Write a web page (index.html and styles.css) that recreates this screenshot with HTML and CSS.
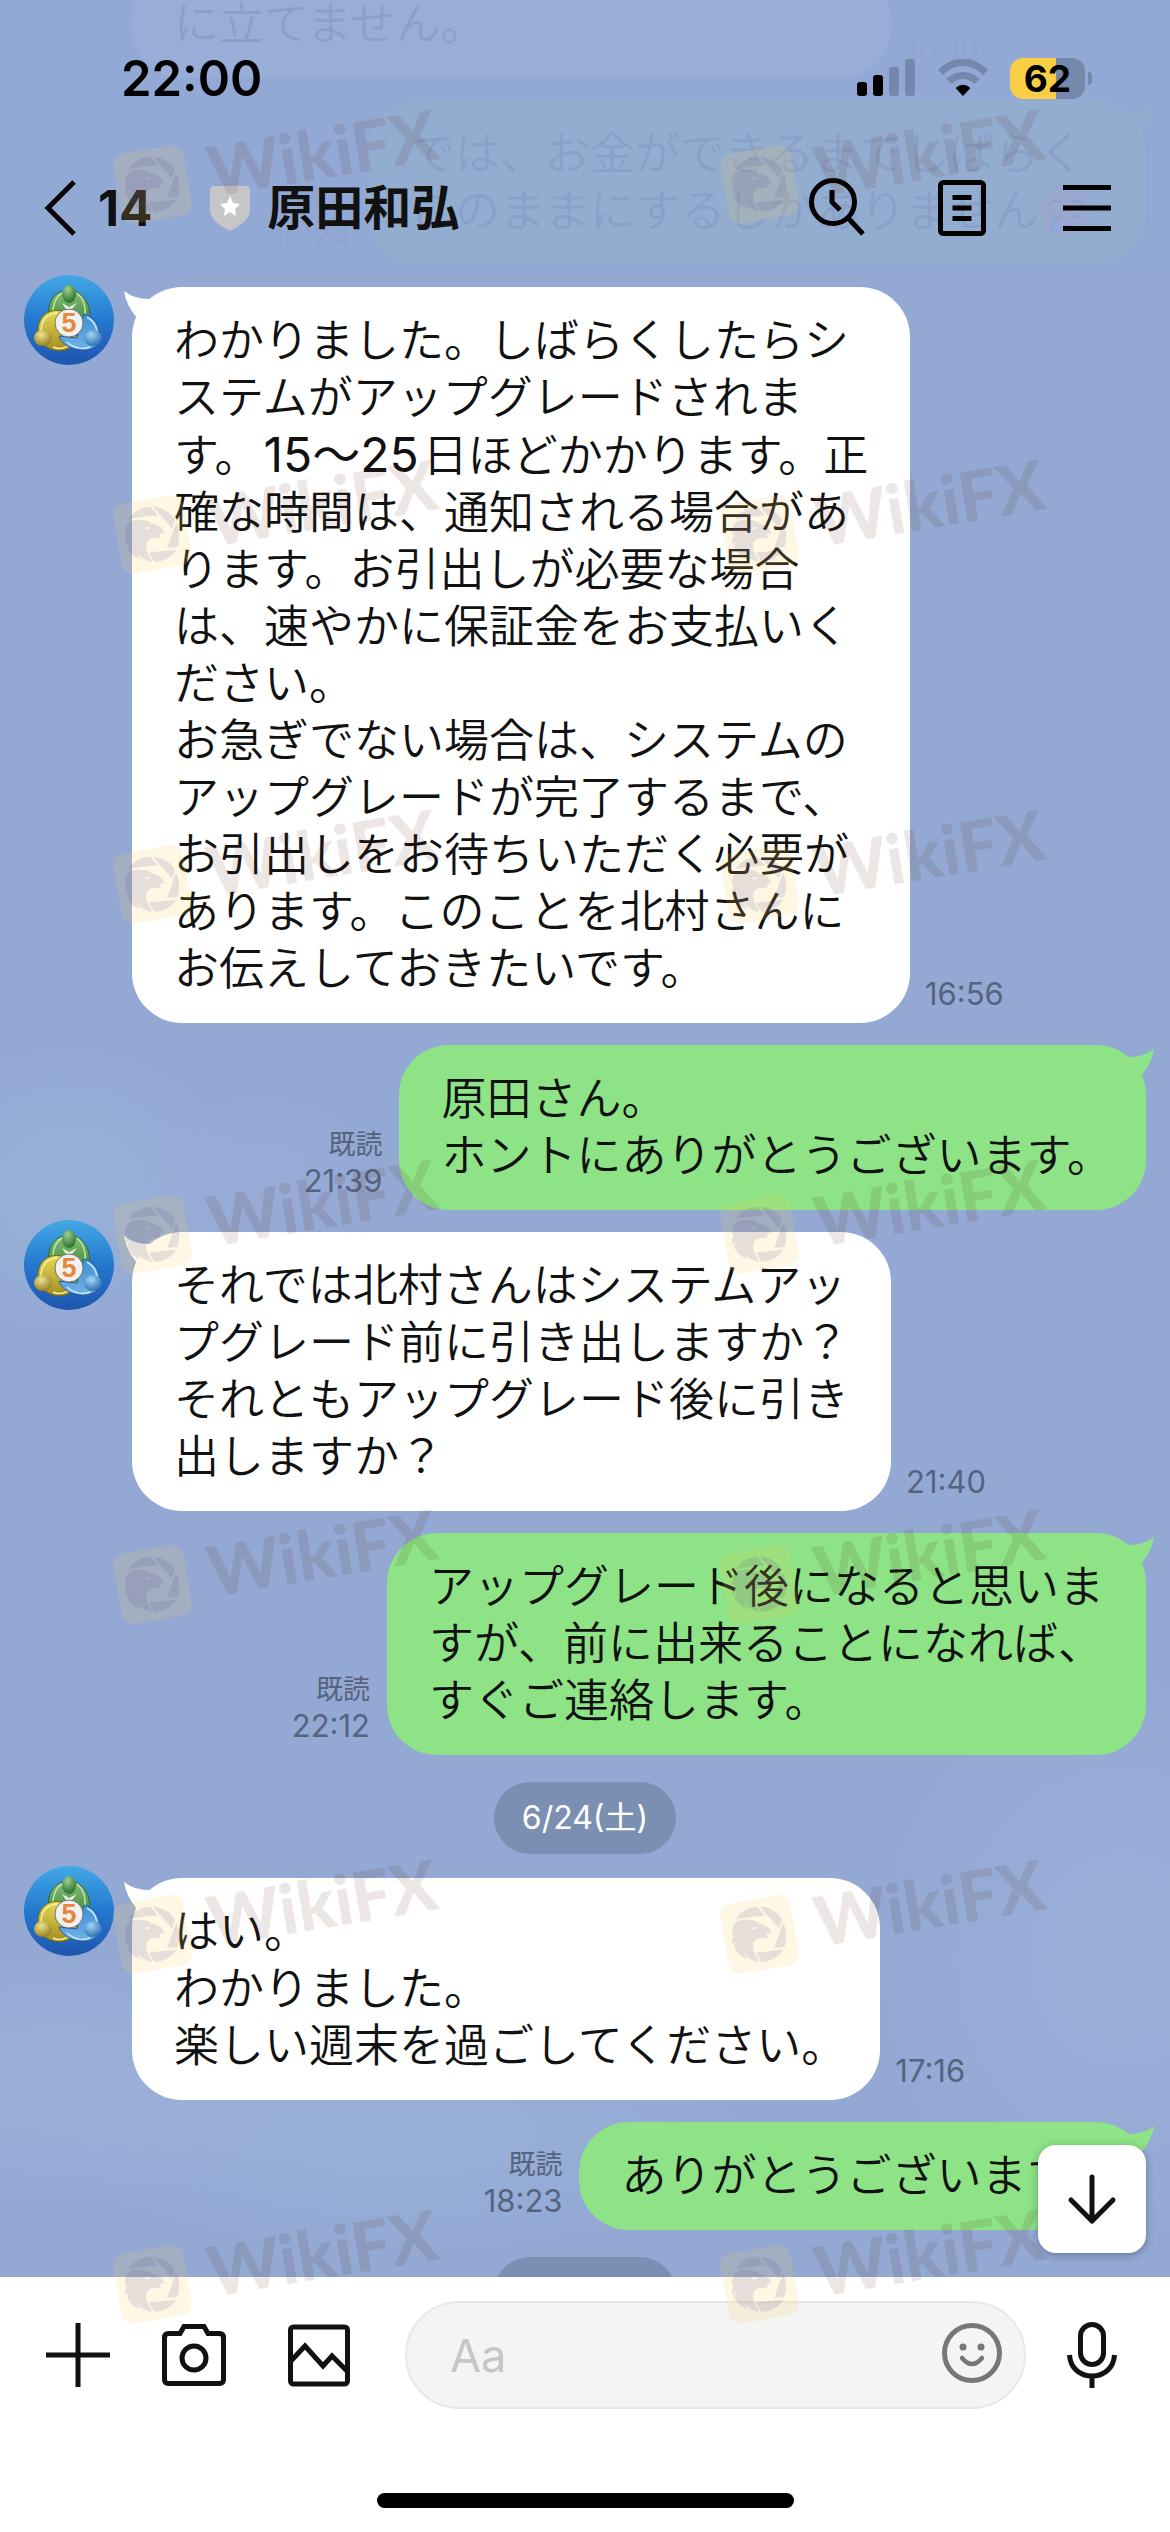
FILE: index.html
```html
<!DOCTYPE html>
<html lang="ja">
<head>
<meta charset="UTF-8">
<meta name="viewport" content="width=device-width, initial-scale=1.0">
<title>原田和弘</title>
<link rel="stylesheet" href="styles.css">
</head>
<body>
  <!-- shared drawings -->
  <svg class="defs" aria-hidden="true">
    <defs>
      <linearGradient id="av-bg" x1="0" y1="0" x2="0" y2="1">
        <stop offset="0" stop-color="#43a9e6"/>
        <stop offset="0.5" stop-color="#2478cf"/>
        <stop offset="1" stop-color="#1f55ae"/>
      </linearGradient>
      <linearGradient id="av-green" x1="0" y1="0" x2="0" y2="1">
        <stop offset="0" stop-color="#8cc078"/>
        <stop offset="1" stop-color="#2a7f31"/>
      </linearGradient>
      <linearGradient id="av-yellow" x1="0" y1="0" x2="0" y2="1">
        <stop offset="0" stop-color="#e6d955"/>
        <stop offset="1" stop-color="#a48c22"/>
      </linearGradient>
      <linearGradient id="av-blue" x1="0" y1="0" x2="0" y2="1">
        <stop offset="0" stop-color="#3f8fd6"/>
        <stop offset="1" stop-color="#6fb2e6"/>
      </linearGradient>
      <radialGradient id="head-green" cx="0.4" cy="0.25" r="0.8">
        <stop offset="0" stop-color="#9fce8c"/>
        <stop offset="1" stop-color="#1f6a28"/>
      </radialGradient>
      <radialGradient id="head-yellow" cx="0.4" cy="0.3" r="0.8">
        <stop offset="0" stop-color="#eee38a"/>
        <stop offset="1" stop-color="#8a7415"/>
      </radialGradient>
      <radialGradient id="head-blue" cx="0.4" cy="0.3" r="0.8">
        <stop offset="0" stop-color="#a5d5f5"/>
        <stop offset="1" stop-color="#1b62ae"/>
      </radialGradient>
    </defs>
    <symbol id="avatar" viewBox="0 0 90 90">
      <circle cx="45" cy="45" r="45" fill="url(#av-bg)"/>
      <path d="M25 43C22 25 33 15 45 15s23 13 20 29c-1 6-4 10-8 11l-3-16H34l-5 5z" fill="url(#av-green)" stroke="#2a6b30" stroke-width="1"/>
      <path d="M29 41c-1-13 5-22 10-23M61 41c1-12-3-19-8-23" fill="none" stroke="#c5e3b6" stroke-width="1.500"/>
      <path d="M38 36C23 33 13 43 14 58c1 13 15 20 27 17 8-2 12-8 13-14l-17-3z" fill="url(#av-yellow)" stroke="#75651a" stroke-width="1"/>
      <path d="M34 38c-11 0-17 8-17 18M29 72c6 3 14 1 19-4" fill="none" stroke="#f8f2a0" stroke-width="1.500"/>
      <path d="M60 39c10 2 17 12 16 25-2 10-14 13-25 10-8-2-14-7-16-13l18 2z" fill="url(#av-blue)" stroke="#215f9f" stroke-width="1"/>
      <path d="M63 42c7 4 10 10 10 17M43 67c6 6 16 8 23 5" fill="none" stroke="#cbe8fb" stroke-width="1.500"/>
      <path d="M38 28l7 4 8-4-5 6h-6z" fill="#e7f2df"/>
      <ellipse cx="45" cy="19" rx="7" ry="9" fill="url(#head-green)"/>
      <ellipse cx="19" cy="63" rx="9" ry="8" fill="url(#head-yellow)"/>
      <ellipse cx="69" cy="63" rx="9" ry="8" fill="url(#head-blue)"/>
      <circle cx="45" cy="48" r="14" fill="#f1f1f3" stroke="#55604a" stroke-width="0.800"/>
      <text x="45" y="57" text-anchor="middle" class="avatar-digit">5</text>
    </symbol>
    <symbol id="mark" viewBox="0 0 350 140">
      <g transform="translate(0 30) scale(0.3333)">
        <rect x="36" y="48" width="213" height="213" rx="34" transform="rotate(-10 142 154)" fill="#fad05a" fill-opacity="0.16"/>
        <g fill="#50469e" fill-opacity="0.14">
          <path d="M72 108C84 86 108 72 136 71L158 97C128 100 100 103 72 108Z"/>
          <path d="M144 71C174 73 196 88 210 110L201 136Z"/>
          <path d="M213 119C225 140 225 168 217 192L187 194Z"/>
          <path d="M137 208L214 200C200 222 176 236 148 236L133 212Z"/>
          <path d="M60 152C61 132 66 120 78 114C100 108 120 110 140 119L138 122C158 123 174 134 178 152C172 148 166 150 162 156C168 159 170 161 164 164C152 165 138 163 130 172C118 186 122 204 138 228L141 236C124 234 104 224 98 210C98 218 102 226 108 230C84 220 70 204 66 190L76 172C70 178 66 182 62 186C59 176 60 168 66 158Z M118 134C122 142 132 141 136 132Z" fill-rule="evenodd"/>
        </g>
      </g>
      <text x="107" y="94" transform="rotate(-9.5 107 94)" class="mark-text">WikiFX</text>
    </symbol>
  </svg>

  <div class="phone">
    <header class="header">
      <div class="status-bar">
        <time class="clock">22:00</time>
        <div class="status-icons">
          <svg width="59" height="38" viewBox="0 0 59 38" aria-hidden="true">
            <rect x="0" y="23" width="10" height="14" rx="3"/>
            <rect x="16" y="16" width="10" height="21" rx="3"/>
            <g fill="#7587ab">
              <rect x="32" y="8" width="10" height="29" rx="3"/>
              <rect x="48" y="0" width="10" height="37" rx="3"/>
            </g>
          </svg>
          <svg width="50" height="38" viewBox="0 0 50 38" aria-hidden="true">
            <path d="M2.500 13.500C15 0 35 0 47.500 13.500" fill="none" stroke="#7587ab" stroke-width="7"/>
            <path d="M11 22.500C19 14.500 31 14.500 39 22.500" fill="none" stroke="#7587ab" stroke-width="7"/>
            <path d="M25 37L17.500 29Q25 22.500 32.500 29Z"/>
          </svg>
          <div class="battery"><span class="battery-level">62</span></div>
        </div>
      </div>
      <nav class="nav">
        <a class="back" href="#">
          <svg width="34" height="56" viewBox="0 0 34 56" aria-hidden="true"><path d="M30 2L4 28L30 54" fill="none" stroke="#000" stroke-width="5"/></svg>
          <span>14</span>
        </a>
        <h1 class="title">
          <svg width="42" height="48" viewBox="0 0 42 48" aria-hidden="true">
            <path d="M5 2H37Q41 2 41 6V26Q41 37 21 47Q1 37 1 26V6Q1 2 5 2Z" fill="#c6c6c8"/>
            <path d="M21 12l3 7 7 1-5 5 1 7-6-4-6 4 1-7-5-5 7-1z" fill="#fff"/>
          </svg>
          原田和弘
        </h1>
        <div class="nav-actions">
          <button type="button" aria-label="検索">
            <svg width="64" height="64" viewBox="0 0 64 64"><g fill="none" stroke="#000" stroke-width="5"><circle cx="28" cy="26" r="21.500"/><path d="M43 42L58 58M27 14V26L35 34"/></g></svg>
          </button>
          <button type="button" aria-label="ノート">
            <svg width="64" height="64" viewBox="0 0 64 64"><g fill="none" stroke="#000" stroke-width="5"><rect x="10.500" y="6.500" width="43" height="51" rx="3"/><path d="M22.500 21.500H41.500M22.500 32H41.500M22.500 42.500H41.500"/></g></svg>
          </button>
          <button type="button" aria-label="メニュー">
            <svg width="64" height="64" viewBox="0 0 64 64"><path d="M8 11.500H56M8 32H56M8 52.500H56" fill="none" stroke="#000" stroke-width="5"/></svg>
          </button>
        </div>
      </nav>
    </header>

    <main class="chat">
      <div class="messages">
        <div class="row">
          <span class="avatar"></span>
          <p class="bubble bubble-wide">に立てません。</p>
          <div class="meta"><time>16:10</time></div>
        </div>

        <div class="row mine">
          <div class="meta">既読<time>16:24</time></div>
          <p class="bubble bubble-widest">では、お金ができるまでしばらく<br>このままにするしかありません<svg class="emoji" viewBox="0 0 54 54" role="img" aria-label="泣き顔"><circle cx="27" cy="27" r="26" fill="#ff9a6a"/><path d="M8 22q6-9 14-4M32 18q8-5 14 4M14 30q5 4 9 0M31 30q5 4 9 0M20 44q7-5 14 0" fill="none" stroke="#5b3418" stroke-width="3"/><path d="M16 32q9 14 0 20-9-6 0-20z" fill="#4fa3f7"/></svg></p>
        </div>

        <div class="row">
          <svg class="avatar" role="img" aria-label="原田和弘"><use href="#avatar"/></svg>
          <p class="bubble bubble-widest">わかりました。しばらくしたらシ<br>ステムがアップグレードされま<br>す。<span class="days">15〜25</span>日ほどかかります。正<br>確な時間は、通知される場合があ<br>ります。お引出しが必要な場合<br>は、速やかに保証金をお支払いく<br>ださい。<br>お急ぎでない場合は、システムの<br>アップグレードが完了するまで、<br>お引出しをお待ちいただく必要が<br>あります。このことを北村さんに<br>お伝えしておきたいです。</p>
          <div class="meta"><time>16:56</time></div>
        </div>

        <div class="row mine">
          <div class="meta">既読<time>21:39</time></div>
          <p class="bubble">原田さん。<br>ホントにありがとうございます。</p>
        </div>

        <div class="row">
          <svg class="avatar" role="img" aria-label="原田和弘"><use href="#avatar"/></svg>
          <p class="bubble bubble-wide">それでは北村さんはシステムアッ<br>プグレード前に引き出しますか？<br>それともアップグレード後に引き<br>出しますか？</p>
          <div class="meta"><time>21:40</time></div>
        </div>

        <div class="row mine">
          <div class="meta">既読<time>22:12</time></div>
          <p class="bubble bubble-wide">アップグレード後になると思いま<br>すが、前に出来ることになれば、<br>すぐご連絡します。</p>
        </div>

        <div class="date">6/24(土)</div>

        <div class="row">
          <svg class="avatar" role="img" aria-label="原田和弘"><use href="#avatar"/></svg>
          <p class="bubble">はい。<br>わかりました。<br>楽しい週末を過ごしてください。</p>
          <div class="meta"><time>17:16</time></div>
        </div>

        <div class="row mine">
          <div class="meta">既読<time>18:23</time></div>
          <p class="bubble">ありがとうございます。</p>
        </div>

        <div class="date">6/25(日)</div>
      </div>

      <button type="button" class="scroll-down" aria-label="最新のメッセージへ">
        <svg width="56" height="56" viewBox="0 0 56 56"><path d="M28 6V50M7 29L28 50L49 29" fill="none" stroke="#111" stroke-width="5" stroke-linecap="round" stroke-linejoin="round"/></svg>
      </button>
    </main>

    <footer class="footer">
      <form class="composer">
        <div class="tools">
          <button type="button" aria-label="追加">
            <svg width="64" height="64" viewBox="0 0 64 64"><path d="M0 32H64M32 0V64" fill="none" stroke="#111" stroke-width="5"/></svg>
          </button>
          <button type="button" aria-label="カメラ">
            <svg width="64" height="64" viewBox="0 0 64 64"><g fill="none" stroke="#111" stroke-width="5"><path d="M6.500 10.500H18L22 3.500H42L46 10.500H57.500Q61.500 10.500 61.500 14.500V56.500Q61.500 60.500 57.500 60.500H6.500Q2.500 60.500 2.500 56.500V14.500Q2.500 10.500 6.500 10.500Z"/><circle cx="32" cy="35" r="12"/></g></svg>
          </button>
          <button type="button" class="photo" aria-label="写真">
            <svg width="64" height="64" viewBox="0 0 64 64"><g fill="none" stroke="#111" stroke-width="5"><rect x="3.500" y="4" width="57" height="57" rx="3"/><path d="M3 39L18 23L36 43L45 33L61 49"/></g></svg>
          </button>
        </div>
        <div class="field">
          <input type="text" placeholder="Aa" aria-label="メッセージ">
          <button type="button" class="smile" aria-label="スタンプ">
            <svg width="60" height="60" viewBox="0 0 60 60"><circle cx="30" cy="30" r="27.500" fill="none" stroke="#777" stroke-width="5"/><circle cx="21" cy="24" r="3.500" fill="#777"/><circle cx="39" cy="24" r="3.500" fill="#777"/><path d="M20 35Q30 47 40 35" fill="none" stroke="#777" stroke-width="4.500" stroke-linecap="round"/></svg>
          </button>
        </div>
        <button type="button" aria-label="音声">
          <svg width="64" height="66" viewBox="0 0 64 66"><g fill="none" stroke="#111" stroke-width="5"><rect x="20.500" y="2.500" width="23" height="40" rx="11.500"/><path d="M9.500 33C11 61 53 61 54.500 33M32 54V66"/></g></svg>
        </button>
      </form>
      <div class="home-indicator"></div>
    </footer>

    <div class="marks" aria-hidden="true">
      <svg><use href="#mark"/></svg><svg><use href="#mark"/></svg>
      <svg><use href="#mark"/></svg><svg><use href="#mark"/></svg>
      <svg><use href="#mark"/></svg><svg><use href="#mark"/></svg>
      <svg><use href="#mark"/></svg><svg><use href="#mark"/></svg>
      <svg><use href="#mark"/></svg><svg><use href="#mark"/></svg>
      <svg><use href="#mark"/></svg><svg><use href="#mark"/></svg>
      <svg><use href="#mark"/></svg><svg><use href="#mark"/></svg>
    </div>
  </div>
</body>
</html>
```
FILE: styles.css
```css
* {
  box-sizing: border-box;
}
body {
  margin: 0;
  font-family: Inter, "Noto Sans CJK JP", sans-serif;
  color: #111;
}
button {
  padding: 0;
  border: none;
  background: none;
  cursor: pointer;
}
svg {
  display: block;
  flex: none;
}
.defs {
  position: absolute;
  width: 0;
  height: 0;
}
.phone {
  position: relative;
  display: flex;
  flex-direction: column;
  height: 100vh;
  overflow: hidden;
}

/* header, lies over the scrolled messages */
.header {
  position: absolute;
  top: 0;
  left: 0;
  right: 0;
  z-index: 2;
  padding-bottom: 12px;
  background-color: rgba(147, 169, 212, 0.94);
}
.status-bar {
  display: flex;
  align-items: center;
  justify-content: space-between;
  height: 156px;
  padding: 0 78px 0 121px;
}
.clock {
  font-size: 49px;
  font-weight: 600;
  color: #000;
}
.status-icons {
  display: flex;
  align-items: center;
  gap: 22px;
}
.battery {
  position: relative;
  width: 75px;
  height: 41px;
  margin-right: 7px;
  border-radius: 13px;
  background: linear-gradient(90deg, #f7ce46 62%, #7587ab 62%);
  text-align: center;
}
.battery::after {
  content: "";
  position: absolute;
  right: -7px;
  top: 14px;
  width: 4px;
  height: 13px;
  border-radius: 0 4px 4px 0;
  background-color: #7587ab;
}
.battery-level {
  font-size: 37px;
  line-height: 41px;
  font-weight: 700;
  color: #000;
}
.nav {
  display: flex;
  align-items: center;
  height: 104px;
  padding: 0 51px 0 44px;
}
.back {
  display: flex;
  align-items: center;
  gap: 20px;
  color: #111;
  font-size: 49px;
  font-weight: 700;
  text-decoration: none;
}
.title {
  display: flex;
  align-items: center;
  gap: 16px;
  margin: 0 0 0 57px;
  font-size: 48px;
  line-height: 60px;
  font-weight: 700;
}
.nav-actions {
  display: flex;
  gap: 61px;
  margin-left: auto;
}

/* messages */
.chat {
  position: relative;
  flex: 1;
  min-height: 0;
  overflow: hidden;
  background:
    radial-gradient(ellipse 180px 150px at 70px 1190px, rgba(157, 182, 219, 0.6), transparent),
    radial-gradient(ellipse 130px 90px at 260px 1180px, rgba(157, 174, 216, 0.5), transparent),
    radial-gradient(ellipse 260px 300px at 96% 1960px, rgba(157, 178, 218, 0.7), transparent),
    radial-gradient(ellipse 300px 130px at 60px 2080px, rgba(160, 178, 218, 0.7), transparent),
    radial-gradient(ellipse 360px 130px at 400px 2130px, rgba(155, 180, 218, 0.7), transparent),
    #93a9d4;
}
.messages {
  display: flex;
  flex-direction: column;
  gap: 22px;
  margin-top: -30px;
  padding: 0 24px;
}
.row {
  display: flex;
  align-items: flex-start;
}
.mine {
  justify-content: flex-end;
}
.avatar {
  flex: none;
  width: 90px;
  height: 90px;
  margin: -12px 18px 0 0;
}
.avatar-digit {
  font: bold 27px "Liberation Sans", sans-serif;
  fill: #e8873a;
}
.bubble {
  position: relative;
  margin: 0;
  padding: 25px 34px 26px 42px;
  border-radius: 50px;
  background-color: #fff;
  font-size: 45px;
  line-height: 57px;
  font-weight: 350;
  white-space: nowrap;
}
.bubble-wide {
  width: 759px;
}
.bubble-widest {
  width: 778px;
}
.days {
  padding: 0 4px;
  font-size: 48px;
  font-weight: 400;
}
.bubble::before {
  content: "";
  position: absolute;
  top: 4px;
  left: -8px;
  width: 40px;
  height: 30px;
  background-color: inherit;
  clip-path: path("M0 0Q12 9 27 8L40 20L13 27Q2 14 0 0Z");
}
.mine .bubble {
  background-color: #8de386;
}
.mine .bubble::before {
  left: auto;
  right: -8px;
  transform: scaleX(-1);
}
.emoji {
  display: inline-block;
  width: 54px;
  height: 54px;
  vertical-align: -12px;
}
.meta {
  align-self: flex-end;
  padding: 0 17px 11px 15px;
  color: #56637e;
  font-size: 27px;
  line-height: 36px;
  text-align: right;
}
.meta time {
  display: block;
  font-size: 31px;
}
.date {
  align-self: center;
  margin: 5px 0 2px;
  padding: 0 28px;
  border-radius: 36px;
  background-color: #7b8fb3;
  color: #fff;
  font-size: 32px;
  line-height: 72px;
}
.scroll-down {
  position: absolute;
  right: 24px;
  bottom: 24px;
  display: flex;
  align-items: center;
  justify-content: center;
  width: 108px;
  height: 108px;
  border-radius: 18px;
  background-color: #fff;
  box-shadow: 0 2px 8px rgba(0, 0, 0, 0.3);
}

/* composer */
.footer {
  padding: 24px 46px;
  background-color: #fff;
}
.composer {
  display: flex;
  align-items: center;
  gap: 34px;
}
.tools {
  display: flex;
  gap: 52px;
  margin-right: 20px;
}
.photo {
  margin-left: 9px;
}
.field {
  position: relative;
  flex: 1;
}
.field input {
  display: block;
  width: 100%;
  height: 108px;
  padding: 0 120px 0 43px;
  border: 2px solid #e8e8e8;
  border-radius: 54px;
  background-color: #f4f4f4;
  font: 45px Inter, "Noto Sans CJK JP", sans-serif;
}
.field input::placeholder {
  color: #c6c6c6;
}
.smile {
  position: absolute;
  right: 24px;
  top: 22px;
}
.home-indicator {
  width: 417px;
  height: 15px;
  margin: 84px auto 0;
  border-radius: 8px;
  background-color: #000;
}

/* watermark tiles over the whole screen */
.marks {
  position: absolute;
  inset: 0;
  z-index: 3;
  display: grid;
  grid-template-columns: 57% 43%;
  grid-auto-rows: 350px;
  padding: 103px 0 0 105px;
  overflow: hidden;
  pointer-events: none;
}
.marks svg {
  width: 350px;
  height: 140px;
}
.mark-text {
  font: 900 69px Lato, sans-serif;
  fill: #501b0a;
  fill-opacity: 0.11;
}
```
